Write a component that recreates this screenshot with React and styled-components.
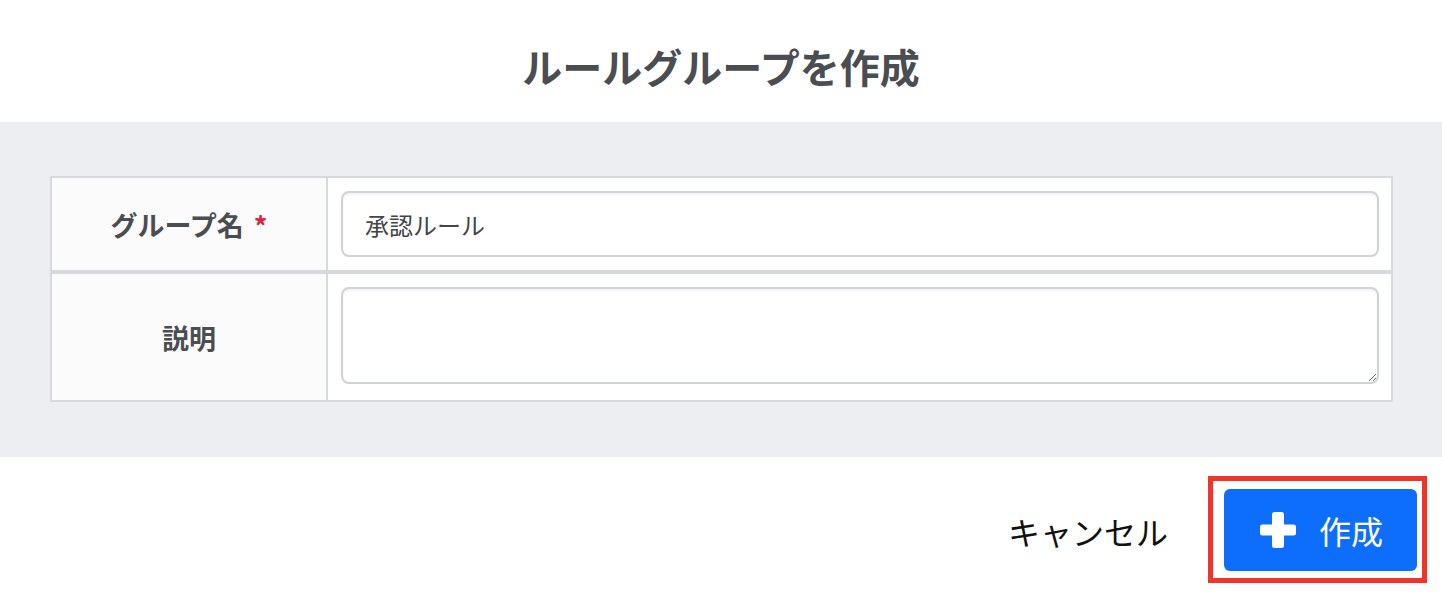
import React from "react";
import styled, { createGlobalStyle } from "styled-components";

const Global = createGlobalStyle`
  html, body { margin: 0; padding: 0; background: #ffffff; }
  body { font-family: "Noto Sans CJK JP", "Noto Sans", sans-serif; }
  * { box-sizing: border-box; }
`;

const Page = styled.div`
  width: 1442px;
  height: 594px;
  display: flex;
  flex-direction: column;
  background: #ffffff;
`;

const Header = styled.header`
  height: 122px;
  padding-top: 10px;
  display: flex;
  align-items: center;
  justify-content: center;
`;

const Title = styled.h1`
  margin: 0;
  font-size: 40px;
  font-weight: 700;
  line-height: 1;
  color: #4a4d52;
`;

const Body = styled.section`
  background: #edeef2;
  padding: 54px 49px 55px 50px;
`;

const Table = styled.div`
  display: flex;
  flex-direction: column;
  background: #ffffff;
`;

const Row = styled.div`
  display: grid;
  grid-template-columns: 276px 1fr;
  border: 2px solid #d5dae0;
`;

const LabelCell = styled.div`
  background: #fbfbfb;
  border-right: 2px solid #d5dae0;
  display: flex;
  align-items: center;
  justify-content: center;
  font-size: 27px;
  font-weight: 700;
  color: #4a4d52;
`;

const Required = styled.span`
  color: #d9263f;
  font-size: 27px;
  font-weight: 700;
  margin-left: 10px;
  position: relative;
  top: 1px;
`;

const FieldCell = styled.div`
  background: #ffffff;
  padding: ${(p) => (p.$tall ? "13px 12px 16px 13px" : "13px 12px 13px 13px")};
  display: flex;
`;

const TextInput = styled.input`
  width: 100%;
  height: 66px;
  border: 2px solid #cfd3d8;
  border-radius: 8px;
  box-shadow: inset 0 2px 2px rgba(0, 0, 0, 0.05);
  padding: 0 22px;
  font-family: "Noto Sans CJK JP", "Noto Sans", sans-serif;
  font-size: 24px;
  color: #444548;
  background: #fff;
  outline: none;
`;

const TextArea = styled.textarea`
  width: 100%;
  height: 97px;
  border: 2px solid #cfd3d8;
  border-radius: 8px;
  box-shadow: inset 0 2px 2px rgba(0, 0, 0, 0.05);
  padding: 14px 22px;
  font-family: "Noto Sans CJK JP", "Noto Sans", sans-serif;
  font-size: 24px;
  color: #444548;
  background: #fff;
  outline: none;
  resize: vertical;
  display: block;
`;

const Footer = styled.footer`
  flex: 1;
  display: flex;
  justify-content: flex-end;
  align-items: flex-start;
  padding: 19px 15px 0 0;
  gap: 40px;
`;

const CancelButton = styled.button`
  background: transparent;
  border: none;
  padding: 4px 0 0;
  height: 106px;
  font-family: "Noto Sans CJK JP", "Noto Sans", sans-serif;
  font-size: 32px;
  color: #111111;
  cursor: pointer;
`;

const Highlight = styled.div`
  border: 5px solid #f0352a;
  padding: 8px 5px 7px 11px;
  display: flex;
`;

const PrimaryButton = styled.button`
  width: 193px;
  height: 82px;
  background: #0d6efd;
  border: none;
  border-radius: 6px;
  color: #ffffff;
  display: flex;
  align-items: center;
  padding: 0 0 0 36px;
  gap: 23px;
  font-family: "Noto Sans CJK JP", "Noto Sans", sans-serif;
  font-size: 32px;
  cursor: pointer;
`;

const PlusIcon = () => (
  <svg width="36" height="36" viewBox="0 0 36 36" aria-hidden="true">
    <rect x="12" y="0" width="12" height="36" rx="2.5" fill="#ffffff" />
    <rect x="0" y="12.5" width="36" height="11" rx="2.5" fill="#ffffff" />
  </svg>
);

export default function App() {
  return (
    <>
      <Global />
      <Page>
        <Header>
          <Title>ルールグループを作成</Title>
        </Header>
        <Body>
          <Table>
            <Row>
              <LabelCell>
                グループ名<Required>*</Required>
              </LabelCell>
              <FieldCell>
                <TextInput defaultValue="承認ルール" />
              </FieldCell>
            </Row>
            <Row>
              <LabelCell>説明</LabelCell>
              <FieldCell $tall>
                <TextArea />
              </FieldCell>
            </Row>
          </Table>
        </Body>
        <Footer>
          <CancelButton>キャンセル</CancelButton>
          <Highlight>
            <PrimaryButton>
              <PlusIcon />
              作成
            </PrimaryButton>
          </Highlight>
        </Footer>
      </Page>
    </>
  );
}
